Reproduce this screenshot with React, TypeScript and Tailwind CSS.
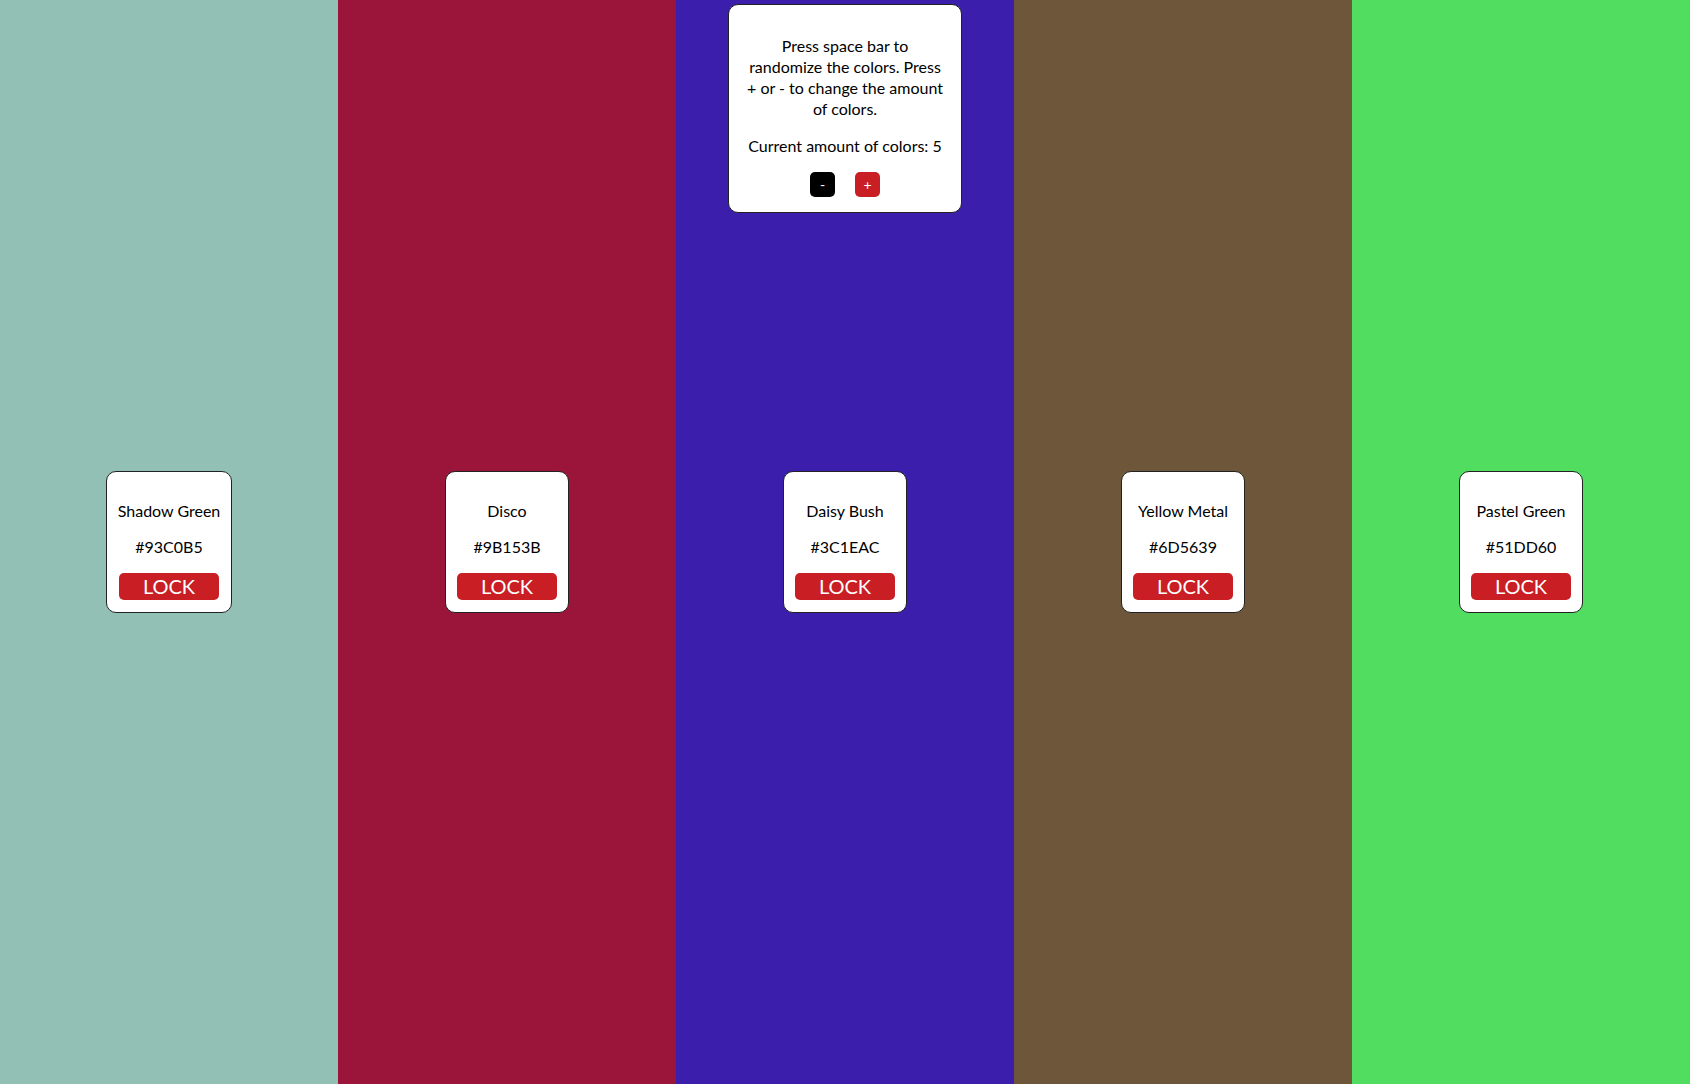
import React from 'react'

const colors = [
  { name: 'Shadow Green', hex: '#93C0B5', bg: 'bg-[#93C0B5]' },
  { name: 'Disco', hex: '#9B153B', bg: 'bg-[#9B153B]' },
  { name: 'Daisy Bush', hex: '#3C1EAC', bg: 'bg-[#3C1EAC]' },
  { name: 'Yellow Metal', hex: '#6D5639', bg: 'bg-[#6D5639]' },
  { name: 'Pastel Green', hex: '#51DD60', bg: 'bg-[#51DD60]' },
]

function ColorCard({ name, hex }: { name: string; hex: string }) {
  return (
    <div className="flex flex-col items-center rounded-[10px] border border-[#222] bg-white px-[11px] pt-[28px] pb-[12px] text-black">
      <p className="whitespace-nowrap text-[16px] leading-[21px]">{name}</p>
      <p className="mt-[15px] text-[16px] leading-[21px]">{hex}</p>
      <button className="mt-[16px] h-[27px] w-[100px] rounded-[5px] bg-[#c81e24] text-[20px] leading-[27px] text-white">
        LOCK
      </button>
    </div>
  )
}

export default function App() {
  return (
    <div className="relative flex h-[1084px] w-full font-['Lato','Noto_Sans',sans-serif]">
      {colors.map((c) => (
        <div key={c.hex} className={`flex flex-1 items-center justify-center ${c.bg}`}>
          <ColorCard name={c.name} hex={c.hex} />
        </div>
      ))}

      <div className="absolute left-1/2 top-[4px] w-[234px] -translate-x-1/2 rounded-[10px] border border-[#222] bg-white px-[12px] pt-[30px] pb-[15px] text-center text-[16px] leading-[21px] text-black">
        <p>
          Press space bar to
          <br />
          randomize the colors. Press
          <br />+ or - to change the amount
          <br />
          of colors.
        </p>
        <p className="mt-[16px]">Current amount of colors: 5</p>
        <div className="mt-[16px] flex justify-center gap-[20px]">
          <button className="h-[25px] w-[25px] rounded-[5px] bg-black text-[14px] leading-[25px] text-white">-</button>
          <button className="h-[25px] w-[25px] rounded-[5px] bg-[#c81e24] text-[14px] leading-[25px] text-white">+</button>
        </div>
      </div>
    </div>
  )
}
